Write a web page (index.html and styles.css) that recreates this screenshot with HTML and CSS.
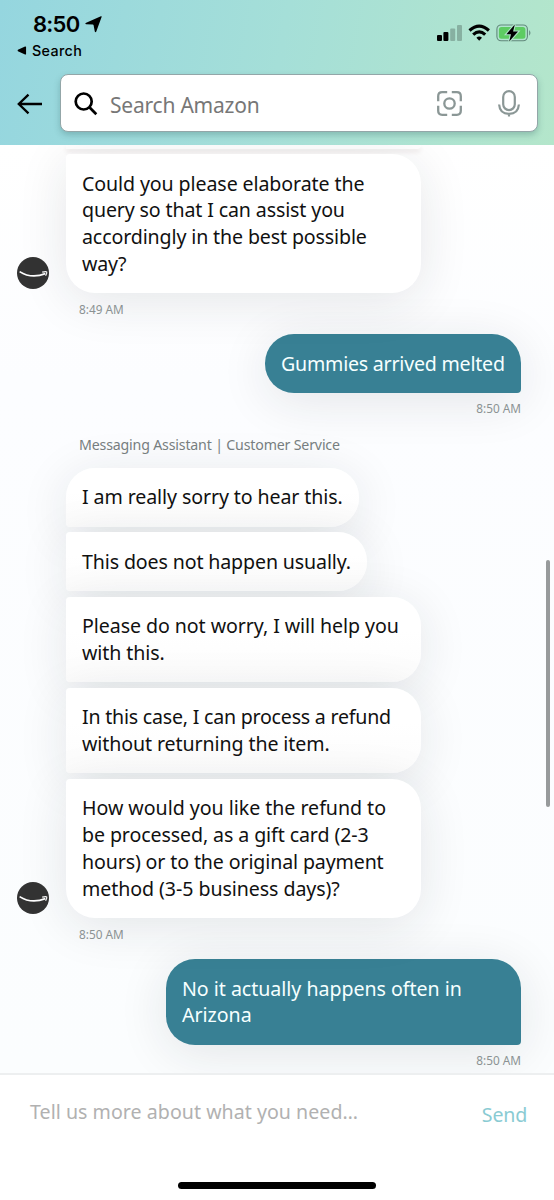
FILE: index.html
```html
<!DOCTYPE html>
<html lang="en">
<head>
<meta charset="utf-8">
<title>Messaging Assistant</title>
<link rel="stylesheet" href="styles.css">
</head>
<body>
<div class="screen">
  <header class="header">
    <div class="status">
      <div class="status-left">
        <div class="clock"><span>8:50</span>
          <svg class="location" viewBox="0 0 17 17"><path d="M15.9.3Q17 0 16.6 1.1L11.3 15.5Q10.5 17.1 9.8 15.5L8.6 9.3Q8.4 8.7 7.8 8.6L1.2 8.3Q-.6 7.5 1.2 6.7Z"/></svg>
        </div>
        <div class="back-app"><svg viewBox="0 0 10 10"><path d="M.5 4.2 8.4.6Q9.5.3 9.5 1.2V8.8Q9.5 9.7 8.4 9.4L.5 5.8Q-.4 5 .5 4.2Z"/></svg><span>Search</span></div>
      </div>
      <svg class="indicators" viewBox="0 0 96 20">
        <rect x="0" y="11" width="5" height="6" rx="1"/><rect x="6.4" y="8" width="5" height="9" rx="1"/>
        <g opacity=".22"><rect x="13.2" y="4.5" width="5" height="12.5" rx="1"/><rect x="20" y="1" width="5" height="16" rx="1"/></g>
        <g fill="none" stroke="#000" stroke-width="3.1"><path d="M32.5 6.5Q42.2-2.3 51.9 6.5"/><path d="M36.2 10.7Q42.2 5 48.2 10.7"/></g>
        <path d="M39.4 13.7Q42.2 11.4 45 13.7L42.2 16.8Z"/>
        <rect x="59.9" y="1" width="30.5" height="15.8" rx="4.2" fill="none" stroke="#61877b" stroke-width="1.1"/>
        <rect x="61.9" y="3" width="26.5" height="11.8" rx="2.5" fill="#5dcc62"/>
        <path d="M92.2 6Q94.7 8.9 92.2 11.8Z" fill="#61877b"/>
        <path d="M77.8.4 69.4 10.2H74L72.2 17.4 81 7.5H76.1Z" stroke="#aee2c8" stroke-width="2.2" paint-order="stroke"/>
      </svg>
    </div>
    <div class="nav">
      <svg class="arrow" viewBox="0 0 26 22"><path d="M25 11H2M11.5 1.7 1.8 11 11.5 20.3"/></svg>
      <div class="search">
        <svg class="glass" viewBox="0 0 24 24"><circle cx="9.7" cy="9.5" r="8"/><path d="M15.4 15.2 22.3 22.2"/></svg>
        <span class="search-hint">Search Amazon</span>
        <svg class="camera" viewBox="0 0 25 25"><path d="M1.2 10.2V5.2Q1.2 1.2 5.2 1.2H10.2M14.8 1.2H19.8Q23.8 1.2 23.8 5.2V10.2M23.8 14.8V19.8Q23.8 23.8 19.8 23.8H14.8M10.2 23.8H5.2Q1.2 23.8 1.2 19.8V14.8"/><circle cx="12.5" cy="12.5" r="5.2"/></svg>
        <svg class="mic" viewBox="0 0 22 27"><rect x="5.2" y="1.1" width="11.6" height="19" rx="5.8"/><path d="M1.1 14.5Q1.8 23.9 11 23.9T20.9 14.5M11 24V26.5"/></svg>
      </div>
    </div>
  </header>

  <main class="chat">
    <div class="previous"></div>
    <div class="row">
      <svg class="avatar" viewBox="0 0 32 32"><circle cx="16" cy="16" r="16"/><path class="smile" d="M2.6 14.6Q14.5 22.2 28.4 16.6"/><path class="tip" d="M25.2 15.2Q29 14.2 29.7 14.9 30.3 16 28.6 18.8"/></svg>
      <div class="bubble wide"><span class="l1">Could you please elaborate the</span><span class="l2">query so that I can assist you</span><span class="l3">accordingly in the best possible</span><span class="l4">way?</span></div>
    </div>
    <div class="time">8:49 AM</div>
    <div class="bubble mine one"><span class="l5">Gummies arrived melted</span></div>
    <div class="time right">8:50 AM</div>
    <div class="sender">Messaging Assistant | Customer Service</div>
    <div class="group">
      <div class="bubble first"><span class="l6">I am really sorry to hear this.</span></div>
      <div class="bubble middle second"><span class="l7">This does not happen usually.</span></div>
      <div class="bubble middle wide"><span class="l8">Please do not worry, I will help you</span><span class="l9">with this.</span></div>
      <div class="bubble middle wide"><span class="l10">In this case, I can process a refund</span><span class="l11">without returning the item.</span></div>
      <div class="row">
        <svg class="avatar" viewBox="0 0 32 32"><circle cx="16" cy="16" r="16"/><path class="smile" d="M2.6 14.6Q14.5 22.2 28.4 16.6"/><path class="tip" d="M25.2 15.2Q29 14.2 29.7 14.9 30.3 16 28.6 18.8"/></svg>
        <div class="bubble wide"><span class="l12">How would you like the refund to</span><span class="l13">be processed, as a gift card (2-3</span><span class="l14">hours) or to the original payment</span><span class="l15">method (3-5 business days)?</span></div>
      </div>
    </div>
    <div class="time">8:50 AM</div>
    <div class="bubble mine wide"><span class="l16">No it actually happens often in</span><span class="l17">Arizona</span></div>
    <div class="time right">8:50 AM</div>
    <div class="scrollbar"></div>
  </main>

  <footer class="composer">
    <div class="compose-row"><span class="compose-hint">Tell us more about what you need…</span><span class="send">Send</span></div>
    <div class="home"></div>
  </footer>
</div>
</body>
</html>
```

FILE: styles.css
```css
* { box-sizing: border-box; }
body { margin: 0; font-family: "Noto Sans", sans-serif; color: #111; }
svg { display: block; flex: none; }
.screen { width: 554px; height: 1200px; overflow: hidden; display: flex; flex-direction: column; background: #fff; }

.header { flex: none; height: 145px; background: linear-gradient(100deg, #95d6df 0%, #a5dfd8 50%, #b4e6cb 100%); }
.status { height: 74px; display: flex; justify-content: space-between; padding: 11px 21px 0 17px; font-family: Inter, sans-serif; color: #000; }
.clock { height: 26px; display: flex; align-items: center; padding-left: 16px; font-size: 22px; font-weight: 600; letter-spacing: -0.75px; gap: 6px; }
.location { width: 17px; height: 17px; }
.back-app { display: flex; align-items: center; gap: 5px; height: 26px; font-size: 14.3px; font-weight: 500; letter-spacing: 0.35px; padding-top: 1px; }
.back-app svg { width: 10px; height: 9px; }
.indicators { width: 96px; height: 20px; margin-top: 13px; }
.nav { display: flex; align-items: center; padding-left: 17px; }
.arrow { width: 26px; height: 22px; margin-top: 2px; fill: none; stroke: #000; stroke-width: 2.3; }
.search { width: 478px; height: 58px; margin-left: 17px; display: flex; align-items: center; padding: 0 17px 0 13px; background: #fff; border: 1px solid #93a6a8; border-radius: 8px; box-shadow: 0 3px 6px rgba(50, 100, 100, .3); }
.glass { width: 24px; height: 24px; margin-top: 2px; fill: none; stroke: #000; stroke-width: 2.7; }
.search-hint { flex: 1; margin-left: 12px; padding-top: 3px; font-size: 21px; letter-spacing: -0.22px; color: #777; white-space: nowrap; }
.camera { width: 25px; height: 25px; fill: none; stroke: #8b9796; stroke-width: 2.3; }
.mic { width: 22px; height: 27px; margin-left: 36px; fill: none; stroke: #8b9796; stroke-width: 2.2; }

.chat { position: relative; height: 928px; flex: none; overflow: hidden; background: linear-gradient(#fff 0, #fcfdff 25%, #fbfdfe 100%); }
.previous { width: 355px; height: 4px; margin: 0 0 5px 66px; background: #fff; border-radius: 0 0 28px 4px; box-shadow: 0 3px 5px #eee9e9; }
.row { display: flex; align-items: flex-end; padding-left: 17px; gap: 17px; }
.avatar { width: 32px; height: 32px; margin-bottom: 4px; fill: #333; }
.smile { fill: none; stroke: #fff; stroke-width: 1.7; }
.tip { fill: none; stroke: #fff; stroke-width: 1.2; }
.bubble { width: max-content; padding: 16.5px 16px 15.5px; background: #fff; border-radius: 4px 29px 29px 29px; box-shadow: 0 8px 50px rgba(30, 40, 50, .11); font-size: 19.6px; line-height: 26.75px; }
.bubble span { display: block; width: max-content; white-space: nowrap; }
.wide { width: 355px; }
.first { width: 292.5px; border-radius: 29px 29px 29px 4px; }
.middle { border-radius: 4px 29px 29px 4px; }
.second { width: 300.5px; }
.group { display: flex; flex-direction: column; gap: 5.6px; }
.group > .bubble { margin-left: 66px; background: linear-gradient(#fff 40%, #fcfcfc); }
.mine { margin: 16px 33px 0 auto; background: #388094; color: #f6ffff; border-radius: 29px 29px 4px 29px; }
.one { width: 256px; }
.time { height: 16px; margin: 7.8px 0 0 79px; line-height: 16px; font-size: 11.8px; color: #8b9293; position: relative; }
.time + .mine { margin-top: 17.4px; }
.right { margin: 7px 33px 0 0; text-align: right; }
.sender { margin: 18.5px 0 11.5px 79px; height: 22px; line-height: 22px; font-size: 14.2px; letter-spacing: -0.18px; color: #777e80; position: relative; white-space: nowrap; }
.scrollbar { position: absolute; right: 4px; top: 415px; width: 4px; height: 247px; border-radius: 2px; background: #979a9b; }

/* Tracking per line */
.l1, .l6, .l9, .l11, .l13 { letter-spacing: -0.1px; }
.l2, .l3, .l7, .l14 { letter-spacing: -0.13px; }
.l4, .l5, .l10 { letter-spacing: -0.22px; }
.l8, .l15 { letter-spacing: -0.07px; }
.l12, .l16, .l17 { letter-spacing: -0.03px; }

.composer { flex: none; height: 127px; border-top: 2px solid #edeff0; background: #fff; }
.compose-row { display: flex; justify-content: space-between; height: 107px; padding: 23px 27px 0 30px; font-size: 19.6px; line-height: 28px; color: #b1b1b1; }
.compose-hint { white-space: nowrap; letter-spacing: 0.03px; }
.send { color: #8acbd3; padding-top: 3px; letter-spacing: -0.2px; }
.home { width: 198px; height: 7px; margin: 0 auto; border-radius: 4px; background: #000; }
```
